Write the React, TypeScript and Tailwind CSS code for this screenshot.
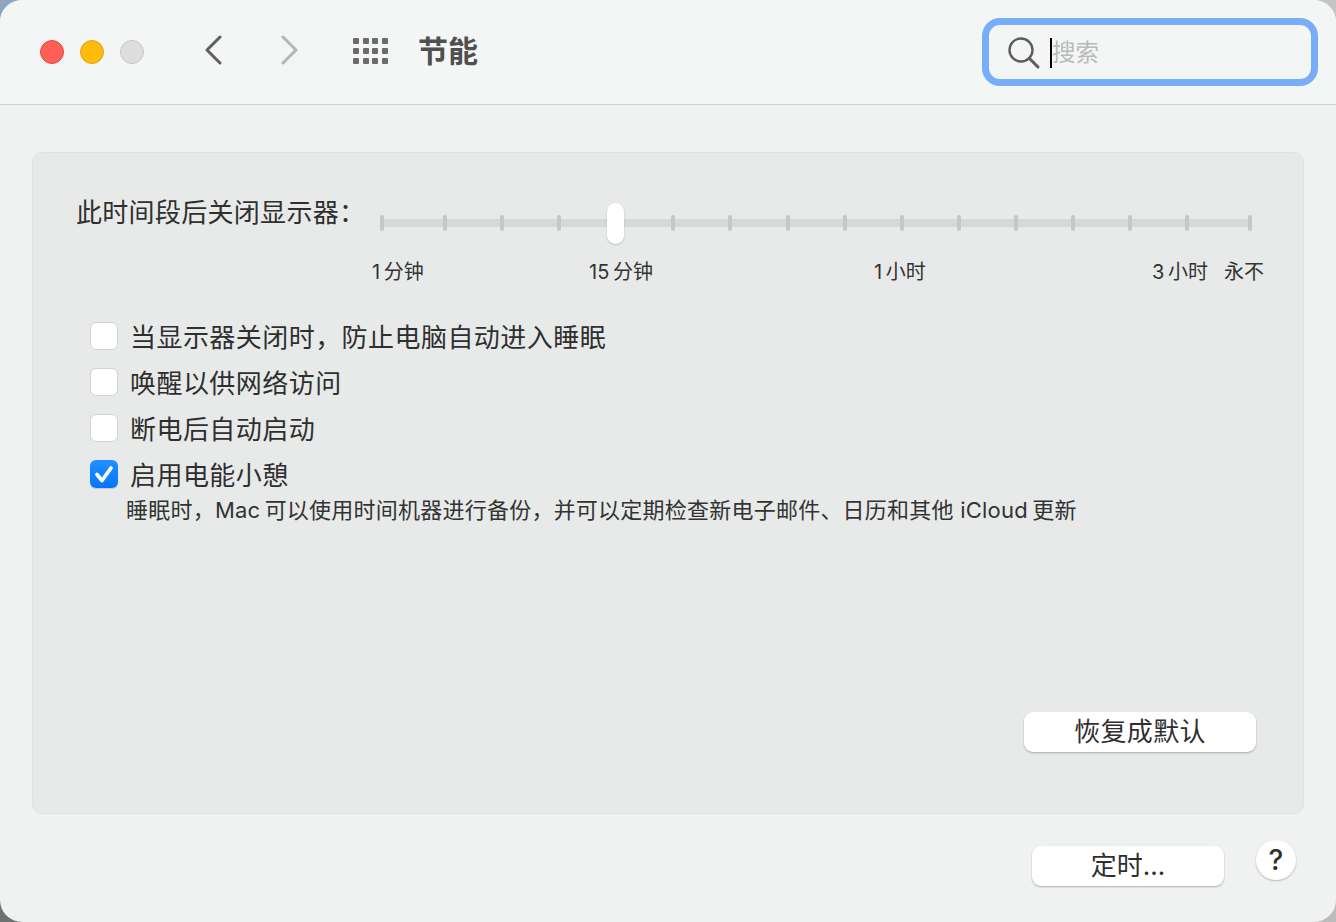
import React from "react";

const FF = "font-['Inter','Noto_Sans_CJK_SC',sans-serif]";

function Check({ checked, label }: { checked?: boolean; label: string }) {
  return (
    <div className="flex items-center h-[27px]">
      {checked ? (
        <div className="w-[28px] h-[28px] rounded-[6px] bg-gradient-to-b from-[#1f8fff] to-[#0675fb] flex items-center justify-center shadow-[0_1px_1px_rgba(0,0,0,0.15)]">
          <svg width="22" height="22" viewBox="0 0 22 22" fill="none">
            <path d="M4 11.5 L9 17.5 L18 5" stroke="#fff" strokeWidth="3.8" strokeLinecap="round" strokeLinejoin="round" />
          </svg>
        </div>
      ) : (
        <div className="w-[28px] h-[28px] rounded-[6px] bg-white border border-[#d0d2d1]" />
      )}
      <span className="ml-[12px] mt-[4px] text-[26px] leading-[36px] tracking-[0.45px] text-[#2f2f2f]">{label}</span>
    </div>
  );
}

export default function App() {
  const ticks = Array.from({ length: 16 });
  return (
    <div className={`${FF} w-[1336px] h-[922px] bg-[conic-gradient(#c4c4c4_0_25%,#bcbcbc_0_50%,#6f7173_0_75%,#8ea6bf_0)] overflow-hidden`}>
      <div className="w-full h-full rounded-[22px] bg-[#f0f2f1] flex flex-col overflow-hidden">
        {/* Title bar */}
        <header className="h-[105px] shrink-0 bg-[#f4f6f5] border-b border-[#cfd1d0] flex items-center pl-[40px] pr-[18px]">
          <div className="flex gap-[16px]">
            <div className="w-[24px] h-[24px] rounded-full bg-[#ff5f57] border border-[#e5473f]" />
            <div className="w-[24px] h-[24px] rounded-full bg-[#febb09] border border-[#e3a50c]" />
            <div className="w-[24px] h-[24px] rounded-full bg-[#dcdddc] border border-[#c5c6c5]" />
          </div>
          <svg className="ml-[60px] mb-[4px]" width="18" height="30" viewBox="0 0 18 30" fill="none">
            <path d="M16 2 L3 15 L16 28" stroke="#5f5f5f" strokeWidth="3" strokeLinecap="round" strokeLinejoin="round" />
          </svg>
          <svg className="ml-[59px] mb-[4px]" width="18" height="30" viewBox="0 0 18 30" fill="none">
            <path d="M2 2 L15 15 L2 28" stroke="#b4b5b4" strokeWidth="3" strokeLinecap="round" strokeLinejoin="round" />
          </svg>
          <div className="ml-[54px] mb-[2px] grid grid-cols-4 gap-[3.7px]">
            {Array.from({ length: 12 }).map((_, i) => (
              <div key={i} className="w-[6px] h-[6px] rounded-[1px] bg-[#6b6b6b]" />
            ))}
          </div>
          <h1 className="ml-[30px] mb-[2px] text-[30px] leading-[40px] font-bold text-[#505050]">节能</h1>
          <div className="ml-auto w-[336px] h-[68px] rounded-[18px] border-[7px] border-[#78aef8] flex items-center pl-[18px]">
            <svg className="mt-[2px]" width="34" height="34" viewBox="0 0 34 34" fill="none">
              <circle cx="14" cy="14" r="11.5" stroke="#5c5c5c" strokeWidth="2.4" />
              <path d="M22.5 22.5 L31 31" stroke="#5c5c5c" strokeWidth="3" strokeLinecap="round" />
            </svg>
            <div className="ml-[9px] mt-[2px] w-[2px] h-[30px] bg-black" />
            <span className="mt-[2px] text-[23.5px] leading-[32px] text-[#b9baba]">搜索</span>
          </div>
        </header>

        {/* Panel */}
        <main className="mt-[47px] mx-[32px] h-[662px] rounded-[10px] bg-[#e8eae9] border border-[#e0e2e1] flex flex-col relative">
          <div className="flex items-start pl-[43px] pt-[42px]">
            <span className="text-[26px] leading-[36px] tracking-[0.3px] text-[#2f2f2f] w-[304px] whitespace-nowrap">此时间段后关闭显示器：</span>
            <div className="relative w-[872px] h-[40px] mt-[8px]">
              <div className="absolute left-0 right-0 top-[16px] h-[8px] rounded-full bg-[#d7d9d8]" />
              <div className="absolute inset-x-0 top-[12px] flex justify-between">
                <div className="flex">
                  {ticks.map((_, i) => (
                    <div
                      key={i}
                      className={`w-[4px] h-[16px] rounded-[2px] bg-[#c6c8c7] mr-[53.1px] first:mr-[59px] last:mr-0 last:ml-[6px] ${i === 4 ? "invisible" : ""}`}
                    />
                  ))}
                </div>
              </div>
              <div className="absolute left-[227px] top-0 w-[17px] h-[41px] rounded-full bg-white shadow-[0_1px_2px_rgba(0,0,0,0.2)]" />
            </div>
          </div>

          <div className="flex ml-[339px] mt-[15px] text-[20px] leading-[28px] text-[#333] whitespace-nowrap">
            <span className="w-[217px]">1{"\u2009"}分钟</span>
            <span className="w-[285px]">15{"\u2009"}分钟</span>
            <span className="w-[278px]">1{"\u2009"}小时</span>
            <span className="w-[72px]">3{"\u2009"}小时</span>
            <span>永不</span>
          </div>

          <div className="flex flex-col gap-[19px] ml-[57px] mt-[36px]">
            <Check label="当显示器关闭时，防止电脑自动进入睡眠" />
            <Check label="唤醒以供网络访问" />
            <Check label="断电后自动启动" />
            <Check checked label="启用电能小憩" />
          </div>
          <p className="ml-[93px] mt-[8px] text-[22px] leading-[30px] tracking-[0.23px] text-[#333] whitespace-nowrap">
            睡眠时，Mac{"\u2009"}可以使用时间机器进行备份，并可以定期检查新电子邮件、日历和其他 iCloud{"\u2009"}更新
          </p>

          <button className="absolute right-[47px] bottom-[61px] w-[232px] h-[40px] rounded-[9px] bg-white shadow-[0_1px_2px_rgba(0,0,0,0.28)] text-[26px] leading-[36px] tracking-[0.3px] text-[#2f2f2f]">
            恢复成默认
          </button>
        </main>

        {/* Footer */}
        <footer className="flex items-start justify-end pr-[40px] mt-[26px]">
          <button className="w-[192px] h-[40px] mt-[6px] rounded-[9px] bg-white shadow-[0_1px_2px_rgba(0,0,0,0.28)] text-[26px] leading-[36px] text-[#2f2f2f]">
            定时...
          </button>
          <button className="ml-[32px] w-[40px] h-[40px] rounded-full bg-white shadow-[0_1px_2px_rgba(0,0,0,0.25)] text-[28px] leading-[38px] font-medium text-[#2f2f2f]">
            ?
          </button>
        </footer>
      </div>
    </div>
  );
}
